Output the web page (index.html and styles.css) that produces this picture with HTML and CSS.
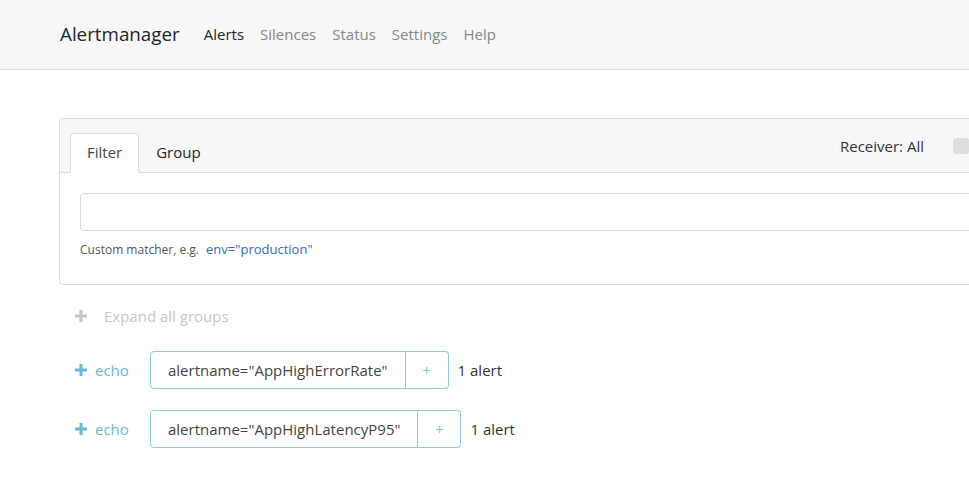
FILE: index.html
```html
<!DOCTYPE html>
<html lang="en">
<head>
<meta charset="utf-8">
<title>Alertmanager</title>
<link rel="stylesheet" href="styles.css">
</head>
<body>
<header class="navbar">
  <div class="container nav-inner">
    <a class="brand">Alertmanager</a>
    <nav class="nav-links">
      <a class="nav-link active">Alerts</a>
      <a class="nav-link">Silences</a>
      <a class="nav-link">Status</a>
      <a class="nav-link">Settings</a>
      <a class="nav-link">Help</a>
    </nav>
  </div>
</header>
<main class="container main">
  <section class="card">
    <div class="card-header">
      <ul class="tabs">
        <li class="tab active">Filter</li>
        <li class="tab">Group</li>
      </ul>
      <div class="receiver">
        <span>Receiver: All</span>
        <span class="checkbox"></span>
      </div>
    </div>
    <div class="card-body">
      <input class="form-input" type="text">
      <p class="help">Custom matcher, e.g. <a class="example">env="production"</a></p>
    </div>
  </section>
  <div class="expand-all">
    <span class="plus plus-muted">
      <svg width="12" height="12" viewBox="0 0 12 12"><path d="M4.5 0h3v4.5H12v3H7.5V12h-3V7.5H0v-3h4.5z"/></svg>
    </span>
    <span>Expand all groups</span>
  </div>
  <div class="group-row">
    <span class="receiver-toggle">
      <svg width="12" height="12" viewBox="0 0 12 12"><path d="M4.5 0h3v4.5H12v3H7.5V12h-3V7.5H0v-3h4.5z"/></svg>
      <span>echo</span>
    </span>
    <div class="btn-group">
      <button class="btn btn-label">alertname="AppHighErrorRate"</button>
      <button class="btn btn-add">+</button>
    </div>
    <span class="count">1 alert</span>
  </div>
  <div class="group-row">
    <span class="receiver-toggle">
      <svg width="12" height="12" viewBox="0 0 12 12"><path d="M4.5 0h3v4.5H12v3H7.5V12h-3V7.5H0v-3h4.5z"/></svg>
      <span>echo</span>
    </span>
    <div class="btn-group">
      <button class="btn btn-label">alertname="AppHighLatencyP95"</button>
      <button class="btn btn-add">+</button>
    </div>
    <span class="count">1 alert</span>
  </div>
</main>
</body>
</html>
```
FILE: styles.css
```css
html, body {
  margin: 0;
  padding: 0;
  overflow: hidden;
}
body {
  font-family: "Open Sans", "Noto Sans", sans-serif;
  color: #212529;
  background: #fff;
  font-size: 15px;
}
.container {
  width: 1140px;
  padding: 0 15px;
  margin-left: 45px;
  box-sizing: border-box;
}
.navbar {
  width: 1230px;
  height: 69px;
  background: #f7f7f7;
  border-bottom: 1px solid #dcdcdc;
  display: flex;
  align-items: center;
}
.nav-inner {
  display: flex;
  align-items: center;
  padding-bottom: 2px;
}
.brand {
  font-size: 18.8px;
  color: #212529;
  margin-right: 24px;
}
.nav-links {
  display: flex;
  gap: 16px;
}
.nav-link {
  color: #878787;
  font-size: 15px;
}
.nav-link.active {
  color: #212529;
}
.main {
  padding-top: 48px;
}
.card {
  border: 1px solid #dcdcdc;
  border-radius: 4px;
  margin-left: -1px;
}
.card-header {
  background: #f7f7f9;
  border-bottom: 1px solid #dcdcdc;
  height: 53px;
  display: flex;
  align-items: flex-end;
  justify-content: space-between;
  padding: 0 200px 0 10px;
  border-radius: 4px 4px 0 0;
}
.tabs {
  list-style: none;
  margin: 0 0 -1px 0;
  padding: 0;
  display: flex;
}
.tab {
  padding: 8px 16px 10px;
  font-size: 15px;
  color: #212529;
  border: 1px solid transparent;
  border-radius: 4px 4px 0 0;
}
.tab.active {
  background: #fff;
  border-color: #dcdcdc #dcdcdc #fff;
  color: #444;
}
.receiver {
  align-self: center;
  display: flex;
  align-items: center;
  gap: 29px;
  font-size: 15px;
  color: #333;
  padding-top: 1px;
}
.checkbox {
  width: 16px;
  height: 16px;
  border-radius: 3px;
  background: #dedede;
}
.card-body {
  padding: 20px 20px 20px;
}
.form-input {
  display: block;
  width: 100%;
  height: 38px;
  box-sizing: border-box;
  border: 1px solid #d9d9d9;
  border-radius: 4px;
  font: inherit;
}
.help {
  margin: 9px 0 6px;
  font-size: 12px;
  color: #555;
}
.example {
  color: #2e6db8;
  margin-left: 4px;
  font-size: 13px;
}
.expand-all {
  display: flex;
  align-items: center;
  gap: 17px;
  margin: 21px 0 0 15px;
  color: #c6c6c6;
}
.plus-muted svg {
  fill: #c6c6c6;
  display: block;
}
.group-row {
  display: flex;
  align-items: center;
  margin-top: 21px;
  margin-left: 15px;
}
.expand-all + .group-row {
  margin-top: 25px;
}
.receiver-toggle {
  display: flex;
  align-items: center;
  gap: 8px;
  color: #6bb7d3;
  width: 75px;
}
.receiver-toggle svg {
  fill: #6bb7d3;
  display: block;
}
.btn-group {
  display: flex;
}
.btn {
  font: inherit;
  font-size: 15px;
  background: #fff;
  border: 1px solid #8ccddc;
  height: 38px;
  color: #444;
  padding: 0 17px;
}
.btn-label {
  border-radius: 4px 0 0 4px;
}
.btn-add {
  border-left: none;
  border-radius: 0 4px 4px 0;
  color: #7cc4d8;
  width: 43px;
  padding: 0;
}
.count {
  margin-left: 9px;
  color: #333;
}
```
